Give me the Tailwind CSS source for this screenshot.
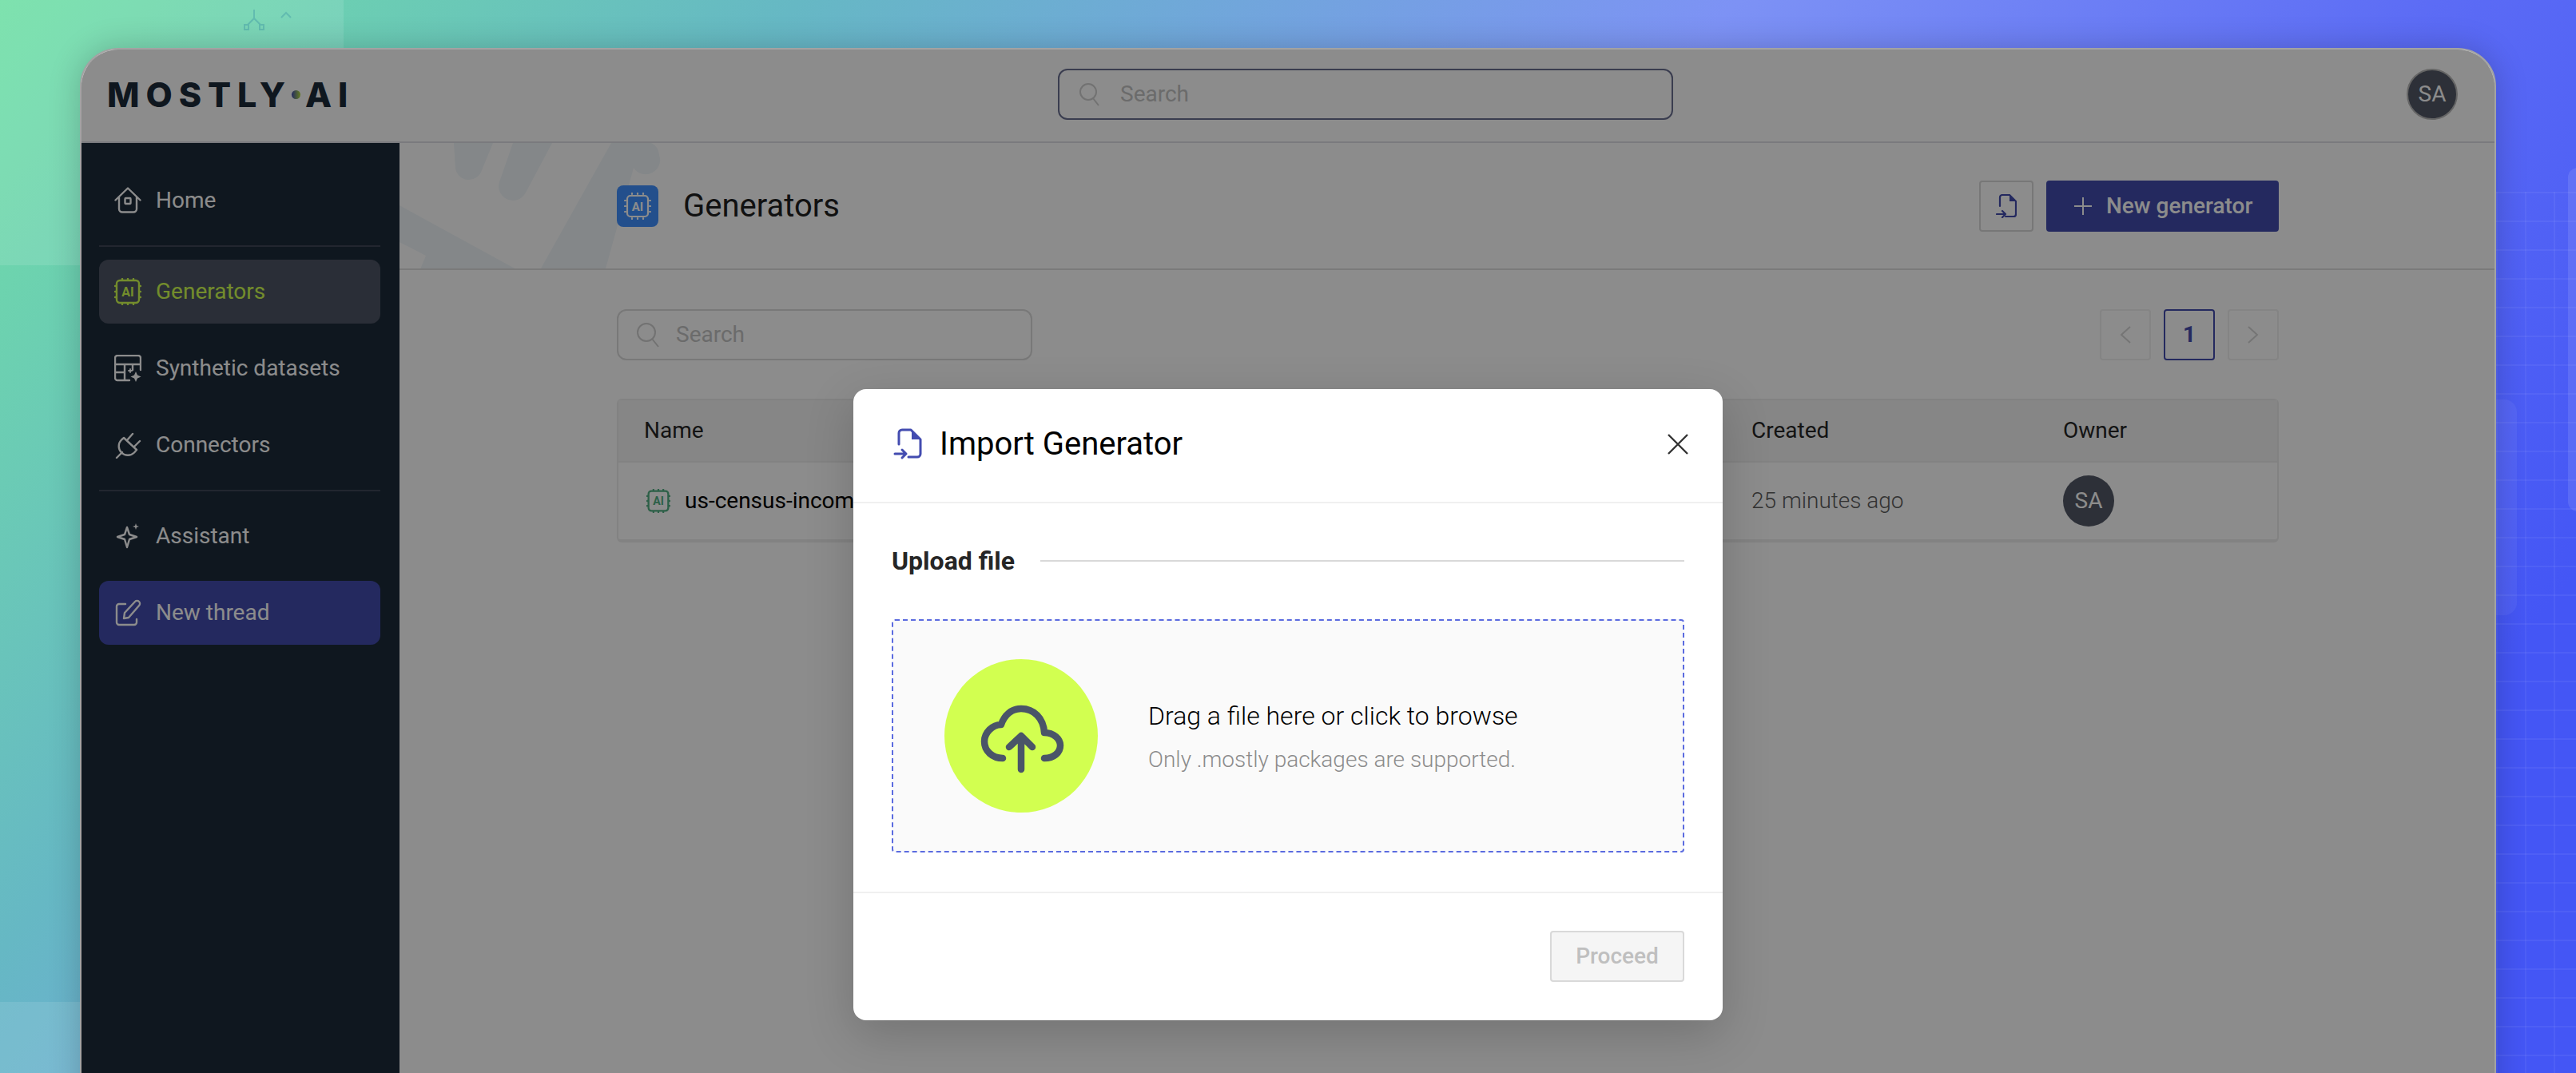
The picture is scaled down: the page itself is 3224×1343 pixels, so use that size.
<!DOCTYPE html>
<html lang="en">
<head>
    <meta charset="UTF-8" />
    <title>Import Generator</title>
    <script src="https://cdn.jsdelivr.net/npm/@tailwindcss/browser@4"></script>
</head>
<body class="relative h-[1343px] w-[3224px] overflow-hidden font-[Roboto,sans-serif] bg-[linear-gradient(130deg,#70dfa5_0%,#66b8c4_23%,#7d92f5_50%,#5c6cf5_70%,#4456f5_88%)]">

<!-- decoration behind the app window -->
<div class="absolute left-0 top-0 h-[332px] w-[430px] bg-white/10"></div>
<svg class="absolute left-[304px] top-[10px]" width="64" height="30" viewBox="0 0 64 30" fill="none" stroke="#62bcb0" stroke-width="2">
    <path d="M14 2v11M14 13l-8 8M14 13l8 8M48 12l6-6 6 6" />
    <rect x="2" y="21" width="5" height="6" /><rect x="21" y="21" width="5" height="6" />
</svg>
<div class="absolute left-0 top-[1254px] h-[89px] w-[100px] bg-white/10"></div>
<div class="absolute left-[3124px] top-[240px] h-[1103px] w-[100px] bg-[linear-gradient(#ffffff0d_2px,transparent_2px),linear-gradient(90deg,#ffffff0d_2px,transparent_2px)] bg-[size:36px_36px]"></div>
<div class="absolute left-[3100px] top-[500px] h-[270px] w-[50px] rounded-[16px] bg-white/5"></div>
<div class="absolute left-[3214px] top-[210px] h-[430px] w-[40px] rounded-[12px] bg-white/10"></div>

<!-- app window -->
<div class="absolute left-[100px] top-[60px] flex h-[1340px] w-[3024px] flex-col overflow-hidden rounded-t-[48px] border-2 border-[#a3a3a3] bg-white shadow-[0_0_40px_rgba(0,0,0,0.2)]">

    <header class="flex h-[117px] shrink-0 items-center border-b-2 border-[#dedee6] pb-[3px] pl-[32px] pr-[46px]">
        <div class="flex w-[304px] items-center font-[Inter,sans-serif] text-[43px] font-extrabold leading-none tracking-[0.185em] text-[#1d2b3a]">
            <span>MOSTLY</span>
            <span class="mr-[6px] h-[11px] w-[11px] shrink-0 rounded-full bg-[linear-gradient(90deg,#434cb0,#b5e03c)]"></span>
            <span>AI</span>
        </div>
        <div class="ml-[886px] flex h-[64px] w-[770px] items-center gap-[24px] rounded-[12px] border-2 border-[#6a6f91] pl-[24px] text-[28px] text-[#c4c4c4]">
            <svg width="28" height="30" viewBox="0 0 28 30" fill="none" stroke="#cfcfcf" stroke-width="2"><circle cx="12" cy="12" r="10" /><path d="M18 20l7 9" /></svg>
            <span>Search</span>
        </div>
        <div class="ml-auto flex h-[64px] w-[64px] items-center justify-center rounded-full border-2 border-[#b8b8b8] bg-[#525866] text-[28px] text-white">SA</div>
    </header>

    <div class="flex min-h-0 flex-1">
        <!-- sidebar -->
        <nav class="flex w-[398px] shrink-0 flex-col gap-[16px] bg-[#1d2b3a] pl-[22px] pr-[24px] pt-[32px] text-[28px] text-white">
            <a class="flex h-[80px] items-center gap-[18px] px-[19px]">
                <svg class="shrink-0" width="34" height="34" viewBox="0 0 34 34" fill="none" stroke="currentColor" stroke-width="2.4" stroke-linecap="round" stroke-linejoin="round">
                    <path d="M1.500 16.500L17 1.500l15.500 15M6 13v14.500a4 4 0 0 0 4 4h14a4 4 0 0 0 4-4V13" /><rect x="13.500" y="14" width="7" height="7" rx="1" />
                </svg>
                <span>Home</span>
            </a>
            <div class="h-[2px] bg-[#3e4557]"></div>
            <a class="flex h-[80px] items-center gap-[18px] rounded-[12px] bg-[#4e5464] px-[19px] text-[#d2ff50]">
                <svg class="shrink-0" width="34" height="34" viewBox="0 0 34 34" fill="none" stroke="currentColor" stroke-width="2.400" stroke-linecap="round">
                    <rect x="3" y="3" width="28" height="28" rx="4" /><path d="M10 1v1M17 1v1M24 1v1M10 32v1M17 32v1M24 32v1M1 10h1M1 17h1M1 24h1M32 10h1M32 17h1M32 24h1" />
                    <text x="17" y="23" text-anchor="middle" font-family="Roboto" font-size="16" font-weight="700" fill="currentColor" stroke="none">AI</text>
                </svg>
                <span>Generators</span>
            </a>
            <a class="flex h-[80px] items-center gap-[18px] px-[19px]">
                <svg class="shrink-0" width="34" height="34" viewBox="0 0 34 34" fill="none" stroke="currentColor" stroke-width="2.400" stroke-linecap="round" stroke-linejoin="round">
                    <path d="M19 32H4a3 3 0 0 1-3-3V4a3 3 0 0 1 3-3h26a3 3 0 0 1 3 3v15M1 12h32M13 12v20M1 22h12M23 12v7" />
                    <path d="M27 21l2 4.500 4.500 2-4.500 2-2 4.500-2-4.500-4.500-2 4.500-2z" fill="currentColor" stroke="none" />
                    <path d="M20 18v4M18 20h4" stroke-width="1.800" />
                </svg>
                <span>Synthetic datasets</span>
            </a>
            <a class="flex h-[80px] items-center gap-[18px] px-[19px]">
                <svg class="shrink-0" width="34" height="34" viewBox="0 0 34 34" fill="none" stroke="currentColor" stroke-width="2.400" stroke-linecap="round" stroke-linejoin="round">
                    <path d="M12 8L28 23l-3 3.500A11 11 0 0 1 9 10.500zM16 11l7-8M25 19l7-7M10 26l-7 7" />
                </svg>
                <span>Connectors</span>
            </a>
            <div class="h-[2px] bg-[#3e4557]"></div>
            <a class="flex h-[80px] items-center gap-[18px] px-[19px]">
                <svg class="shrink-0" width="34" height="34" viewBox="0 0 34 34" fill="none" stroke="currentColor" stroke-width="2.400" stroke-linejoin="round">
                    <path d="M16 6l3 9 9 3-9 3-3 10-3-10-9-3 9-3z" />
                    <path d="M27 1l1 3 3 1-3 1-1 3-1-3-3-1 3-1z" fill="currentColor" stroke="none" />
                </svg>
                <span>Assistant</span>
            </a>
            <a class="flex h-[80px] items-center gap-[18px] rounded-[12px] bg-[#434cae] px-[19px]">
                <svg class="shrink-0" width="34" height="34" viewBox="0 0 34 34" fill="none" stroke="currentColor" stroke-width="2.400" stroke-linecap="round" stroke-linejoin="round">
                    <path d="M14 6H6a3 3 0 0 0-3 3v20a3 3 0 0 0 3 3h19a3 3 0 0 0 3-3v-4" />
                    <path d="M12 24l1-7L26 3a3 3 0 0 1 5 5L18 23z" />
                </svg>
                <span>New thread</span>
            </a>
        </nav>

        <!-- main -->
        <main class="min-w-0 flex-1">
            <div class="relative flex h-[159px] items-center overflow-hidden border-b-2 border-[#dedede] pl-[272px]">
                <svg class="absolute left-0 top-0" width="360" height="157" viewBox="0 0 360 157" fill="#f0f6fa">
                    <path d="M68 0h49l-14 34a17 17 0 0 1-33-2zM142 0h49l-33 62a17 17 0 0 1-32-16zM265 0h50a18 18 0 0 1 10 15a18 18 0 0 1-32 16L258 157h-81zM0 78l146 80H26l7-17L0 124z" />
                </svg>
                <div class="relative flex w-[2080px] items-center">
                    <div class="flex h-[52px] w-[52px] items-center justify-center rounded-[8px] bg-[#4191ff] text-white">
                        <svg width="34" height="34" viewBox="0 0 34 34" fill="none" stroke="currentColor" stroke-width="2.200" stroke-linecap="round">
                            <rect x="4" y="4" width="26" height="26" rx="4" /><path d="M10 1v1M17 1v1M24 1v1M10 32v1M17 32v1M24 32v1M1 10h1M1 17h1M1 24h1M32 10h1M32 17h1M32 24h1" />
                            <text x="17" y="23" text-anchor="middle" font-family="Roboto" font-size="15" font-weight="700" fill="currentColor" stroke="none">AI</text>
                        </svg>
                    </div>
                    <h1 class="ml-[31px] text-[40px] leading-none text-[#1f1f1f]">Generators</h1>
                    <button class="ml-auto flex h-[64px] w-[68px] items-center justify-center rounded-[4px] border-2 border-[#d9d9d9] text-[#434cae]">
                        <svg width="26" height="30" viewBox="0 0 26 30" fill="none" stroke="currentColor" stroke-width="2.200" stroke-linecap="round" stroke-linejoin="round">
                            <path d="M5 15V4a3 3 0 0 1 3-3h9l8 8v16a3 3 0 0 1-3 3H12" /><path d="M17 1v8h8" fill="currentColor" stroke="none" /><path d="M1 25h11M8 21l4 4-4 4" />
                        </svg>
                    </button>
                    <button class="ml-[16px] flex h-[64px] w-[291px] items-center rounded-[4px] bg-[#434cae] pl-[35px] text-[28px] font-medium text-white">
                        <svg width="22" height="22" viewBox="0 0 22 22" stroke="currentColor" stroke-width="2"><path d="M11 0v22M0 11h22" /></svg>
                        <span class="ml-[18px]">New generator</span>
                    </button>
                </div>
            </div>

            <div class="ml-[272px] w-[2080px] pt-[49px]">
                <div class="flex items-center justify-between">
                    <div class="flex h-[64px] w-[520px] items-center gap-[20px] rounded-[12px] border-2 border-[#dadada] pl-[22px] text-[28px] text-[#c4c4c4]">
                        <svg width="30" height="32" viewBox="0 0 30 32" fill="none" stroke="#cfcfcf" stroke-width="2"><circle cx="13" cy="13" r="11" /><path d="M20 21l8 10" /></svg>
                        <span>Search</span>
                    </div>
                    <div class="flex gap-[16px] text-[#d5d5d5]">
                        <div class="flex h-[64px] w-[64px] items-center justify-center rounded-[4px] border-2 border-[#f0f0f0]">
                            <svg width="14" height="22" viewBox="0 0 14 22" fill="none" stroke="currentColor" stroke-width="2"><path d="M13 1L2 11l11 10" /></svg>
                        </div>
                        <div class="flex h-[64px] w-[64px] items-center justify-center rounded-[4px] border-2 border-[#434cae] text-[28px] font-bold text-[#434cae]">1</div>
                        <div class="flex h-[64px] w-[64px] items-center justify-center rounded-[4px] border-2 border-[#f0f0f0]">
                            <svg width="14" height="22" viewBox="0 0 14 22" fill="none" stroke="currentColor" stroke-width="2"><path d="M1 1l11 10L1 21" /></svg>
                        </div>
                    </div>
                </div>

                <div class="mt-[48px] rounded-[6px] border-2 border-b-4 border-[#ededed] text-[28px]">
                    <div class="grid h-[78px] grid-cols-[1418px_390px_1fr] items-center border-b-2 border-[#ededed] bg-[#f5f5f5] text-[#262626]">
                        <div class="pl-[32px]">Name</div>
                        <div>Created</div>
                        <div>Owner</div>
                    </div>
                    <div class="grid h-[96px] grid-cols-[1418px_390px_1fr] items-center">
                        <div class="flex items-center gap-[18px] pl-[35px] text-black">
                            <svg class="shrink-0" width="30" height="30" viewBox="0 0 34 34" fill="none" stroke="#52af83" stroke-width="2.600" stroke-linecap="round">
                                <rect x="3" y="3" width="28" height="28" rx="4" /><path d="M10 1v1M17 1v1M24 1v1M10 32v1M17 32v1M24 32v1M1 10h1M1 17h1M1 24h1M32 10h1M32 17h1M32 24h1" />
                                <text x="17" y="23" text-anchor="middle" font-family="Roboto" font-size="16" font-weight="700" fill="#52af83" stroke="none">AI</text>
                            </svg>
                            <span>us-census-income</span>
                        </div>
                        <div class="font-light text-[#5c5c5c]">25 minutes ago</div>
                        <div class="flex h-[64px] w-[64px] items-center justify-center rounded-full bg-[#525866] text-white">SA</div>
                    </div>
                </div>
            </div>
        </main>
    </div>

    <!-- modal overlay -->
    <div class="absolute inset-0 flex justify-center bg-black/45 pt-[425px]">
        <div class="h-[790px] w-[1088px] rounded-[16px] bg-white shadow-[0_18px_60px_rgba(0,0,0,0.18)]">
            <div class="flex h-[143px] items-center border-b-2 border-[#f0f0f0] pb-[4px] pl-[50px] pr-[43px]">
                <svg width="36" height="40" viewBox="0 0 36 40" fill="none" stroke="#434cb0" stroke-width="3" stroke-linecap="round" stroke-linejoin="round">
                    <path d="M7 20V6a4 4 0 0 1 4-4h11l12 12v18a4 4 0 0 1-4 4H19" /><path d="M23 2l11 12H23z" fill="#434cb0" stroke="none" /><path d="M2 32h14M11 27l5 5-5 5" />
                </svg>
                <h2 class="ml-[22px] text-[40px] leading-none text-black">Import Generator</h2>
                <button class="ml-auto">
                    <svg class="block" width="26" height="26" viewBox="0 0 26 26" stroke="#333" stroke-width="2.400"><path d="M1 1l24 24M25 1L1 25" /></svg>
                </button>
            </div>

            <div class="flex items-center gap-[32px] pl-[48px] pr-[48px] pt-[52px]">
                <span class="text-[32px] font-bold leading-[40px] text-[#262626]">Upload file</span>
                <div class="h-[2px] flex-1 bg-[#d9d9d9]"></div>
            </div>

            <div class="mx-[48px] mt-[53px] flex h-[292px] items-center gap-[63px] rounded-[4px] border-2 border-dashed border-[#5b6be0] bg-[#fafafa] pl-[64px]">
                <div class="h-[192px] w-[192px] shrink-0 rounded-full bg-[#d2ff50]">
                    <svg width="192" height="192" viewBox="0 0 192 192" fill="none" stroke="#4a5568" stroke-width="8.500" stroke-linecap="round" stroke-linejoin="round">
                        <path d="M73 124C60 124 50 115 50 103C50 92 60 82 71 82C75 70 84 62 96 62C112 62 124 74 125 92C137 92 145 100 145 108C145 117 137 124 125 124" />
                        <path d="M96 138V96M81 110L96 96L110 110" />
                    </svg>
                </div>
                <div class="flex flex-col gap-[11px]">
                    <span class="text-[32px] font-light leading-[48px] text-black">Drag a file here or click to browse</span>
                    <span class="text-[28px] font-light leading-[40px] text-[#8c8c8c]">Only .mostly packages are supported.</span>
                </div>
            </div>

            <div class="mt-[49px] flex justify-end border-t-2 border-[#f0f0f0] pr-[48px] pt-[47px]">
                <button class="h-[64px] w-[168px] rounded-[4px] border-2 border-[#d9d9d9] bg-[#f5f5f5] text-[28px] font-medium text-[#bfbfbf]">Proceed</button>
            </div>
        </div>
    </div>
</div>
</body>
</html>
